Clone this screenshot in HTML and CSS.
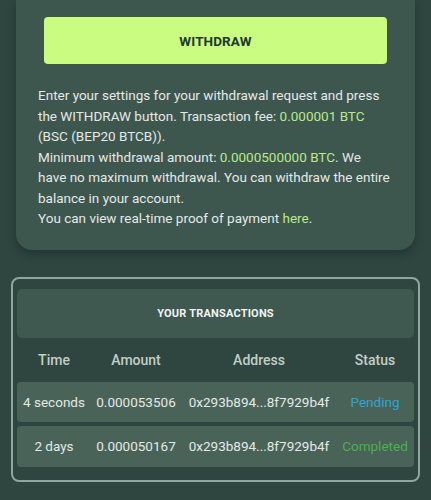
FILE: index.html
```html
<!DOCTYPE html>
<html lang="en">
  <head>
    <meta charset="UTF-8" />
    <meta name="viewport" content="width=device-width, initial-scale=1.0" />
    <title>Withdraw</title>
    <link rel="stylesheet" href="styles.css">
  </head>
  <body>
    <div class="withdraw-card">
      <button class="withdraw-btn">WITHDRAW</button>
      <p class="withdraw-info">
        Enter your settings for your withdrawal request and press the WITHDRAW button. Transaction fee: <span class="hl">0.000001 BTC</span> (BSC (BEP20 BTCB)).<br />
        Minimum withdrawal amount: <span class="hl">0.0000500000 BTC</span>. We have no maximum withdrawal. You can withdraw the entire balance in your account.<br />
        You can view real-time proof of payment <a href="#" class="hl">here</a>.
      </p>
    </div>

    <div class="tx-box">
      <div class="tx-title">YOUR TRANSACTIONS</div>
      <div class="tx-head">
        <span>Time</span>
        <span>Amount</span>
        <span>Address</span>
        <span>Status</span>
      </div>
      <div class="tx-row">
        <span>4 seconds</span>
        <span>0.000053506</span>
        <span>0x293b894...8f7929b4f</span>
        <span class="pending">Pending</span>
      </div>
      <div class="tx-row">
        <span>2 days</span>
        <span>0.000050167</span>
        <span>0x293b894...8f7929b4f</span>
        <span class="completed">Completed</span>
      </div>
    </div>
  </body>
</html>
```

FILE: styles.css
```css
body {
  margin: 0;
  background-color: #2e463f;
  font-family: Roboto, "Liberation Sans", sans-serif;
  color: #e4e9e6;
}
/* Withdraw card */
.withdraw-card {
  margin: 0 16px;
  padding: 17px 23px 21px 22px;
  background-color: #3d564e;
  border-radius: 0 0 16px 16px;
  box-shadow: 0px 4px 10px rgba(0, 0, 0, 0.25);
}
.withdraw-btn {
  display: block;
  width: 343px;
  height: 47px;
  margin: 0 0 0 6px;
  border: none;
  border-radius: 4px;
  background-color: #c9fc80;
  color: #22372e;
  font-family: Roboto, sans-serif;
  font-weight: 700;
  font-size: 13.5px;
  letter-spacing: 0.1px;
}
.withdraw-info {
  margin: 21px 0 0;
  font-size: 13.5px;
  line-height: 20.5px;
}
.hl {
  color: #b9ea8a;
  text-decoration: none;
}
/* Transactions */
.tx-box {
  margin: 27px 11px 0;
  padding: 10px 4px 13px;
  border: 2px solid #8ca79b;
  border-radius: 8px;
}
.tx-title {
  height: 49px;
  line-height: 49px;
  background-color: #3f5850;
  border-radius: 5px;
  text-align: center;
  font-size: 11px;
  font-weight: 700;
  color: #f1f4f2;
  letter-spacing: 0.2px;
}
.tx-head,
.tx-row {
  display: grid;
  grid-template-columns: 74px 90px 156px 76px;
  align-items: center;
  text-align: center;
  white-space: nowrap;
}
.tx-head {
  height: 44px;
  font-size: 14px;
  font-weight: 500;
  color: #c3cec9;
}
.tx-row {
  height: 40px;
  margin-bottom: 4px;
  background-color: #4a6359;
  border-radius: 4px;
  font-size: 13.5px;
}
.tx-row:last-child {
  height: 41px;
  margin-bottom: 0;
}
.pending {
  color: #2ea4d6;
}
.completed {
  color: #4caf50;
}
```
